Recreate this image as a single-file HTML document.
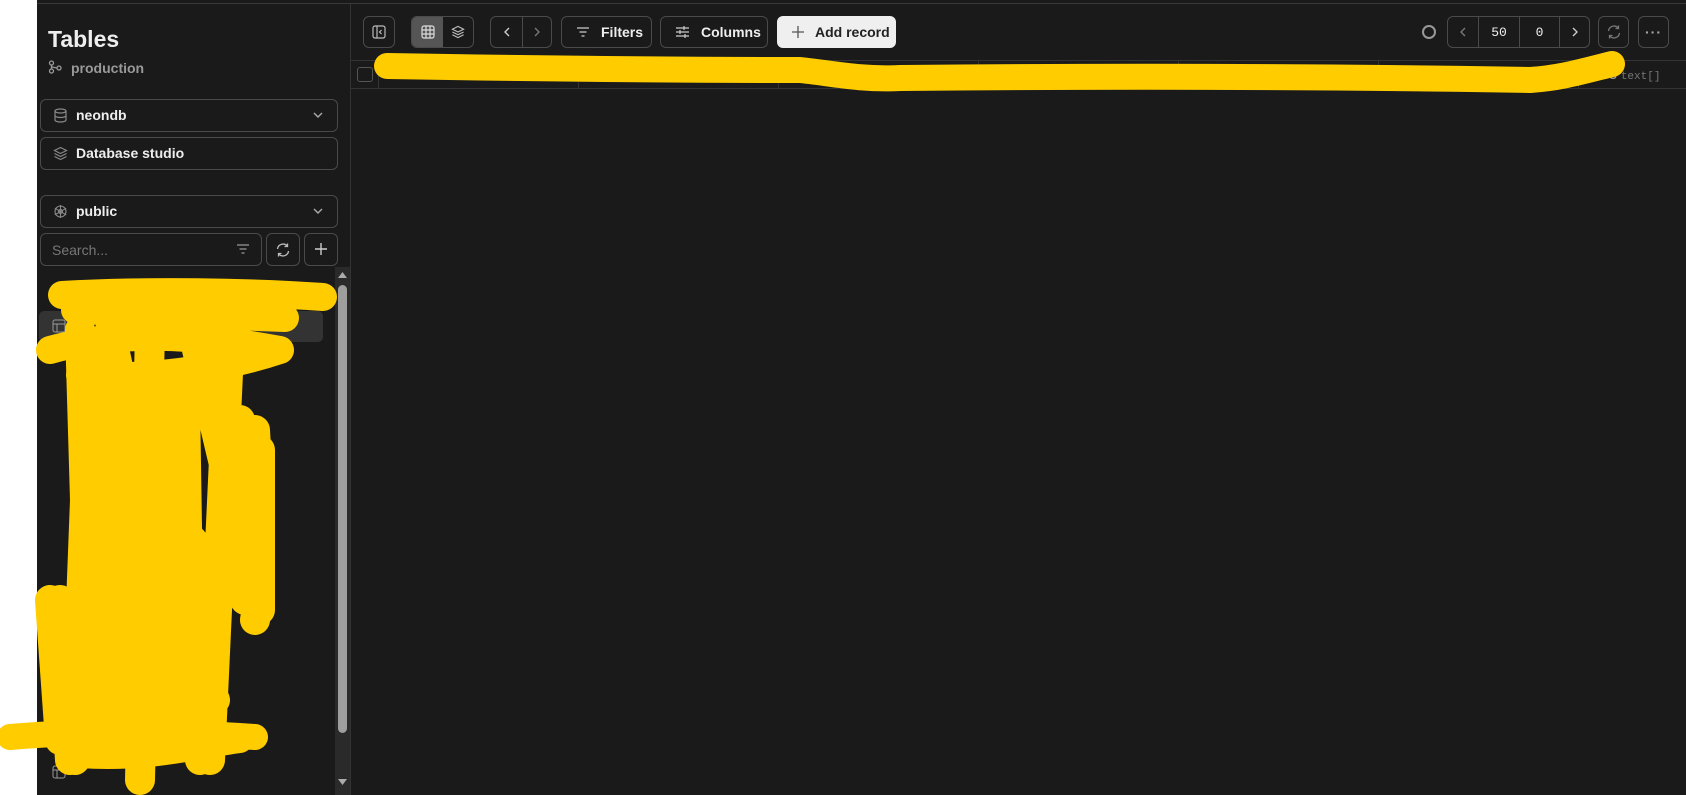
<!DOCTYPE html><html><head><style>
*{box-sizing:border-box;margin:0;padding:0}
body{width:1686px;height:795px;background:#fff;position:relative;overflow:hidden;font-family:"Liberation Sans",sans-serif;color:#eee}
.a{position:absolute}
.box{position:absolute;border:1px solid #4a4a4a;border-radius:6px;background:#1a1a1a}
.btn{position:absolute;top:16px;height:32px;border:1px solid #4a4a4a;border-radius:6px;display:flex;align-items:center;font-size:14px;font-weight:bold;color:#eee;white-space:nowrap}
svg{display:block}
</style></head><body>
<div class="a" style="left:37px;top:0;width:1649px;height:795px;background:#1a1a1a"></div>
<div class="a" style="left:37px;top:3px;width:1649px;height:1px;background:#3a3a3a"></div>
<div class="a" style="left:350px;top:4px;width:1px;height:791px;background:#333"></div>
<div class="a" style="left:48px;top:26px;font-size:23px;font-weight:bold;color:#eee">Tables</div>
<svg class="a" style="left:48px;top:60px" width="14" height="14" viewBox="0 0 14 14" fill="none" stroke="#999" stroke-width="1.3"><circle cx="3.5" cy="3" r="2"/><circle cx="3.5" cy="11" r="2"/><circle cx="11" cy="8" r="2"/><path d="M3.5 5v4M3.5 7c2 0 4 1 5.5 1"/></svg>
<div class="a" style="left:71px;top:60px;font-size:14px;font-weight:bold;color:#999">production</div>
<div class="box" style="left:40px;top:99px;width:298px;height:33px"></div>
<svg class="a" style="left:53px;top:108px" width="15" height="15" viewBox="0 0 15 15" fill="none" stroke="#888" stroke-width="1.2"><ellipse cx="7.5" cy="3" rx="5.5" ry="2"/><path d="M2 3v9c0 1.1 2.5 2 5.5 2s5.5-.9 5.5-2V3M2 7.5c0 1.1 2.5 2 5.5 2s5.5-.9 5.5-2"/></svg>
<div class="a" style="left:76px;top:107px;font-size:14px;font-weight:bold">neondb</div>
<svg class="a" style="left:312px;top:110px" width="12" height="10" viewBox="0 0 12 10" fill="none" stroke="#aaa" stroke-width="1.4"><path d="M2 3l4 4 4-4"/></svg>
<div class="box" style="left:40px;top:137px;width:298px;height:33px"></div>
<svg class="a" style="left:53px;top:146px" width="15" height="15" viewBox="0 0 15 15" fill="none" stroke="#888" stroke-width="1.2"><path d="M7.5 1.5l6 3-6 3-6-3z M1.5 7.5l6 3 6-3 M1.5 10.5l6 3 6-3"/></svg>
<div class="a" style="left:76px;top:145px;font-size:14px;font-weight:bold">Database studio</div>
<div class="box" style="left:40px;top:195px;width:298px;height:33px"></div>
<svg class="a" style="left:53px;top:204px" width="15" height="15" viewBox="0 0 15 15" fill="none" stroke="#888" stroke-width="1.1"><circle cx="7.5" cy="7.5" r="2"/><path d="M7.5 1v13M1.8 4.2l11.4 6.6M1.8 10.8l11.4-6.6"/><circle cx="7.5" cy="7.5" r="5.5"/></svg>
<div class="a" style="left:76px;top:203px;font-size:14px;font-weight:bold">public</div>
<svg class="a" style="left:312px;top:206px" width="12" height="10" viewBox="0 0 12 10" fill="none" stroke="#aaa" stroke-width="1.4"><path d="M2 3l4 4 4-4"/></svg>
<div class="box" style="left:40px;top:233px;width:222px;height:33px"></div>
<div class="a" style="left:52px;top:242px;font-size:14px;color:#777">Search...</div>
<svg class="a" style="left:236px;top:243px" width="14" height="12" viewBox="0 0 14 12" fill="none" stroke="#999" stroke-width="1.3"><path d="M1 2h12M3.5 6h7M5.5 10h3"/></svg>
<div class="box" style="left:266px;top:233px;width:34px;height:33px"></div>
<svg class="a" style="left:275px;top:242px" width="16" height="16" viewBox="0 0 16 16" fill="none" stroke="#bbb" stroke-width="1.3"><path d="M2.5 7a5.5 5.5 0 0 1 10-2.5M13.5 9a5.5 5.5 0 0 1-10 2.5M12.5 1.5v3h-3M3.5 14.5v-3h3"/></svg>
<div class="box" style="left:304px;top:233px;width:34px;height:33px"></div>
<svg class="a" style="left:314px;top:242px" width="14" height="14" viewBox="0 0 14 14" stroke="#ccc" stroke-width="1.4"><path d="M7 1v12M1 7h12"/></svg>
<div class="a" style="left:39px;top:311px;width:284px;height:31px;background:#333;border-radius:5px"></div>
<svg class="a" style="left:52px;top:319px" width="14" height="14" viewBox="0 0 14 14" fill="none" stroke="#999"><rect x="1" y="1" width="12" height="12" rx="2"/><path d="M1 5h12M5 5v8"/></svg>
<svg class="a" style="left:52px;top:765px" width="14" height="14" viewBox="0 0 14 14" fill="none" stroke="#999"><rect x="1" y="1" width="12" height="12" rx="2"/><path d="M1 5h12M5 5v8"/></svg>
<div class="a" style="left:335px;top:267px;width:15px;height:528px;background:#2a2a2a"></div>
<div class="a" style="left:338px;top:285px;width:9px;height:448px;background:#9e9e9e;border-radius:5px"></div>
<svg class="a" style="left:337px;top:271px" width="11" height="8"><path d="M1 7L5.5 1 10 7z" fill="#aaa"/></svg>
<svg class="a" style="left:337px;top:778px" width="11" height="8"><path d="M1 1L5.5 7 10 1z" fill="#aaa"/></svg>
<!-- toolbar -->
<div class="btn" style="left:363px;width:32px;justify-content:center"><svg width="14" height="14" viewBox="0 0 14 14" fill="none" stroke="#bbb" stroke-width="1.2"><rect x="1" y="1" width="12" height="12" rx="2"/><path d="M5 1v12M9.5 5l-2 2 2 2"/></svg></div>
<div class="btn" style="left:411px;width:63px;overflow:hidden"><div style="width:31px;height:100%;background:#555;display:flex;align-items:center;justify-content:center"><svg width="14" height="14" viewBox="0 0 14 14" fill="none" stroke="#ddd" stroke-width="1.2"><rect x="1" y="1" width="12" height="12" rx="2"/><path d="M1 5h12M1 9h12M5 1v12M9 1v12"/></svg></div><div style="flex:1;display:flex;justify-content:center"><svg width="14" height="14" viewBox="0 0 15 15" fill="none" stroke="#bbb" stroke-width="1.2"><path d="M7.5 1.5l6 3-6 3-6-3z M1.5 7.5l6 3 6-3 M1.5 10.5l6 3 6-3"/></svg></div></div>
<div class="btn" style="left:490px;width:62px"><div style="width:32px;height:100%;border-right:1px solid #4a4a4a;display:flex;align-items:center;justify-content:center"><svg width="10" height="12" fill="none" stroke="#ccc" stroke-width="1.4"><path d="M7 2L3 6l4 4"/></svg></div><div style="flex:1;display:flex;justify-content:center"><svg width="10" height="12" fill="none" stroke="#777" stroke-width="1.4"><path d="M3 2l4 4-4 4"/></svg></div></div>
<div class="btn" style="left:561px;width:91px;padding-left:14px"><svg width="14" height="12" viewBox="0 0 14 12" fill="none" stroke="#ccc" stroke-width="1.3"><path d="M1 2h12M3.5 6h7M5.5 10h3"/></svg><span style="margin-left:11px">Filters</span></div>
<div class="btn" style="left:660px;width:108px;padding-left:14px"><svg width="15" height="14" viewBox="0 0 15 14" fill="none" stroke="#ccc" stroke-width="1.2"><path d="M1 3h13M1 7h13M1 11h13M9 1v4M5 5v4M10 9v4"/></svg><span style="margin-left:11px">Columns</span></div>
<div class="btn" style="left:777px;width:119px;background:#efefef;border-color:#efefef;padding-left:14px"><svg width="12" height="12" stroke="#555" stroke-width="1.3"><path d="M6 0v12M0 6h12"/></svg><span style="margin-left:11px;color:#222">Add record</span></div>
<svg class="a" style="left:1421px;top:24px" width="16" height="16"><circle cx="8" cy="8" r="6" fill="none" stroke="#999" stroke-width="2"/></svg>
<div class="btn" style="left:1447px;width:143px;font-family:'Liberation Mono',monospace;font-weight:normal;font-size:13px"><div style="width:31px;height:100%;border-right:1px solid #4a4a4a;display:flex;align-items:center;justify-content:center"><svg width="10" height="12" fill="none" stroke="#777" stroke-width="1.4"><path d="M7 2L3 6l4 4"/></svg></div><div style="width:41px;height:100%;border-right:1px solid #4a4a4a;display:flex;align-items:center;justify-content:center">50</div><div style="width:40px;height:100%;border-right:1px solid #4a4a4a;display:flex;align-items:center;justify-content:center">0</div><div style="flex:1;display:flex;justify-content:center"><svg width="10" height="12" fill="none" stroke="#ccc" stroke-width="1.4"><path d="M3 2l4 4-4 4"/></svg></div></div>
<div class="btn" style="left:1598px;width:31px;justify-content:center"><svg width="16" height="16" viewBox="0 0 16 16" fill="none" stroke="#777" stroke-width="1.3"><path d="M2.5 7a5.5 5.5 0 0 1 10-2.5M13.5 9a5.5 5.5 0 0 1-10 2.5M12.5 1.5v3h-3M3.5 14.5v-3h3"/></svg></div>
<div class="btn" style="left:1638px;width:31px;justify-content:center;color:#aaa;letter-spacing:1px">···</div>
<!-- table header -->
<div class="a" style="left:351px;top:60px;width:1335px;height:1px;background:#333"></div>
<div class="a" style="left:351px;top:88px;width:1335px;height:1px;background:#333"></div>
<div class="a" style="left:357px;top:67px;width:16px;height:15px;border:1px solid #555;border-radius:3px"></div>
<div class="a" style="left:378px;top:60px;width:1px;height:28px;background:#333"></div>
<div class="a" style="left:578px;top:60px;width:1px;height:28px;background:#333"></div>
<div class="a" style="left:778px;top:60px;width:1px;height:28px;background:#333"></div>
<div class="a" style="left:978px;top:60px;width:1px;height:28px;background:#333"></div>
<div class="a" style="left:1178px;top:60px;width:1px;height:28px;background:#333"></div>
<div class="a" style="left:1378px;top:60px;width:1px;height:28px;background:#333"></div>
<div class="a" style="left:1578px;top:60px;width:1px;height:28px;background:#333"></div>
<div class="a" style="left:1585px;top:66px;font-size:14px;font-weight:bold;color:#999">uses <span style="font-family:'Liberation Mono',monospace;font-size:11px;font-weight:normal;color:#777">text[]</span></div>
<!-- yellow scribbles -->
<svg class="a" style="left:0;top:0" width="1686" height="795" fill="none" stroke="#ffcc00" stroke-linecap="round" stroke-linejoin="round">
<path stroke-width="26" d="M387 66C500 68 650 70 800 70C830 73 860 80 900 78C1100 76 1300 76 1530 80C1560 78 1580 72 1612 64"/>
<path stroke-width="28" d="M62 295C150 290 250 292 323 297M75 310L285 318M50 350C120 330 200 335 280 350C220 370 140 380 80 375"/>
<path stroke-width="30" d="M80 330L85 500L75 760M110 330L160 560L110 750M150 330L140 780M190 320L230 490L200 760M240 420L245 600M230 330L210 760M260 450L260 610M60 600L70 760M200 560L150 720M120 460L210 560M85 680C120 720 180 720 215 700M50 600L60 740M255 430C260 520 262 580 255 620"/>
<path stroke-width="26" d="M10 737C90 730 180 732 255 737M80 755C150 760 200 745 240 740"/>
<path stroke-width="60" d="M100 380L110 720M170 400L175 720"/>
</svg>
</body></html>
